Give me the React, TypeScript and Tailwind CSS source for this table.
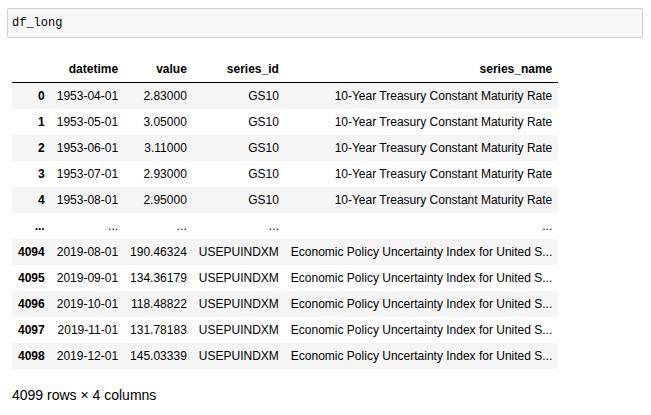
import React from 'react';

type Row = [string, string, string, string, string];

const rows: Row[] = [
  ['0', '1953-04-01', '2.83000', 'GS10', '10-Year Treasury Constant Maturity Rate'],
  ['1', '1953-05-01', '3.05000', 'GS10', '10-Year Treasury Constant Maturity Rate'],
  ['2', '1953-06-01', '3.11000', 'GS10', '10-Year Treasury Constant Maturity Rate'],
  ['3', '1953-07-01', '2.93000', 'GS10', '10-Year Treasury Constant Maturity Rate'],
  ['4', '1953-08-01', '2.95000', 'GS10', '10-Year Treasury Constant Maturity Rate'],
  ['...', '...', '...', '...', '...'],
  ['4094', '2019-08-01', '190.46324', 'USEPUINDXM', 'Economic Policy Uncertainty Index for United S...'],
  ['4095', '2019-09-01', '134.36179', 'USEPUINDXM', 'Economic Policy Uncertainty Index for United S...'],
  ['4096', '2019-10-01', '118.48822', 'USEPUINDXM', 'Economic Policy Uncertainty Index for United S...'],
  ['4097', '2019-11-01', '131.78183', 'USEPUINDXM', 'Economic Policy Uncertainty Index for United S...'],
  ['4098', '2019-12-01', '145.03339', 'USEPUINDXM', 'Economic Policy Uncertainty Index for United S...'],
];

const columns = ['datetime', 'value', 'series_id', 'series_name'];

export default function App() {
  return (
    <div className="min-h-[415px] w-[651px] bg-white pt-[8px] text-black font-['Liberation_Sans',Arial,sans-serif]">
      {/* input cell */}
      <div className="ml-[7px] flex h-[30px] w-[636px] items-center rounded-[2px] border border-[#cfcfcf] bg-[#f7f7f7] px-[4px]">
        <span className="text-[12px] font-['Liberation_Mono',monospace]">df_long</span>
      </div>

      {/* output */}
      <div className="ml-[12px] mt-[18px]">
        <table className="border-collapse text-[12px] leading-[14px]">
          <thead>
            <tr className="border-b border-black">
              <th className="px-[6px] py-[6px]"></th>
              {columns.map((c) => (
                <th key={c} className="whitespace-nowrap px-[6px] py-[6px] text-right font-bold">
                  {c}
                </th>
              ))}
            </tr>
          </thead>
          <tbody>
            {rows.map((r, i) => (
              <tr key={i} className="odd:bg-[#f5f5f5]">
                <th className="whitespace-nowrap px-[6px] py-[6px] text-right font-bold">{r[0]}</th>
                {r.slice(1).map((v, j) => (
                  <td key={j} className="whitespace-nowrap px-[6px] py-[6px] text-right">
                    {v}
                  </td>
                ))}
              </tr>
            ))}
          </tbody>
        </table>
        <p className="mt-[16px] text-[14px]">4099 rows × 4 columns</p>
      </div>
    </div>
  );
}
